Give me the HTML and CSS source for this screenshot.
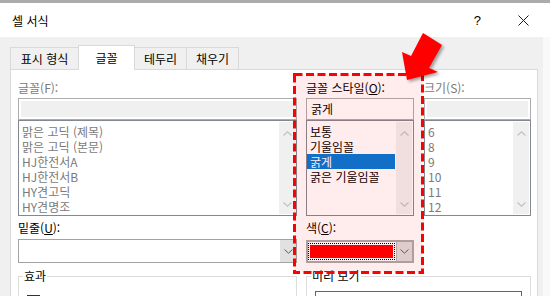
FILE: index.html
```html
<!DOCTYPE html>
<html lang="ko">
<head>
    <meta charset="UTF-8">
    <meta name="viewport" content="width=device-width, initial-scale=1.0">
    <title>셀 서식</title>
    <link rel="stylesheet" href="styles.css">
</head>
<body>
    <div class="window">
        <div class="titlebar">
            <span class="title">셀 서식</span>
            <span class="help">?</span>
            <svg class="close" width="11" height="11" viewBox="0 0 11 11"><path d="M0.5 0.5 L10.5 10.5 M10.5 0.5 L0.5 10.5" stroke="#1a1a1a" stroke-width="1" fill="none"/></svg>
        </div>

        <div class="dialog">
            <div class="tabs">
                <div class="tab t1">표시 형식</div>
                <div class="tab t2 active">글꼴</div>
                <div class="tab t3">테두리</div>
                <div class="tab t4">채우기</div>
            </div>

            <div class="panel">
                <!-- row: labels -->
                <div class="label off">글꼴(F):</div>
                <div class="label">글꼴 스타일(<u>O</u>):</div>
                <div class="label off c3">크기(S):</div>

                <!-- row: pickers -->
                <div class="picker">
                    <div class="field off"></div>
                    <div class="list off">
                        <ul>
                            <li>맑은 고딕 (제목)</li>
                            <li>맑은 고딕 (본문)</li>
                            <li>HJ한전서A</li>
                            <li>HJ한전서B</li>
                            <li>HY견고딕</li>
                            <li>HY견명조</li>
                        </ul>
                        <div class="scroll">
                            <svg width="9" height="5"><polyline points="0.5,4.5 4.5,0.8 8.5,4.5" fill="none" stroke="#c4c4c4" stroke-width="1.3"/></svg>
                            <svg width="9" height="5"><polyline points="0.5,0.5 4.5,4.2 8.5,0.5" fill="none" stroke="#c4c4c4" stroke-width="1.3"/></svg>
                        </div>
                    </div>
                </div>
                <div class="picker">
                    <div class="field">굵게</div>
                    <div class="list">
                        <ul>
                            <li>보통</li>
                            <li>기울임꼴</li>
                            <li class="selected">굵게</li>
                            <li>굵은 기울임꼴</li>
                        </ul>
                        <div class="scroll">
                            <svg width="9" height="5"><polyline points="0.5,4.5 4.5,0.8 8.5,4.5" fill="none" stroke="#c4c4c4" stroke-width="1.3"/></svg>
                            <svg width="9" height="5"><polyline points="0.5,0.5 4.5,4.2 8.5,0.5" fill="none" stroke="#c4c4c4" stroke-width="1.3"/></svg>
                        </div>
                    </div>
                </div>
                <div class="picker c3">
                    <div class="field off"></div>
                    <div class="list off">
                        <ul>
                            <li>6</li>
                            <li>8</li>
                            <li>9</li>
                            <li>10</li>
                            <li>11</li>
                            <li>12</li>
                        </ul>
                        <div class="scroll">
                            <svg width="9" height="5"><polyline points="0.5,4.5 4.5,0.8 8.5,4.5" fill="none" stroke="#c4c4c4" stroke-width="1.3"/></svg>
                            <svg width="9" height="5"><polyline points="0.5,0.5 4.5,4.2 8.5,0.5" fill="none" stroke="#c4c4c4" stroke-width="1.3"/></svg>
                        </div>
                    </div>
                </div>

                <!-- row: underline / colour labels -->
                <div class="label row2">밑줄(<u>U</u>):</div>
                <div class="label row2">색(<u>C</u>):</div>
                <div></div>

                <!-- row: combos -->
                <div class="combo">
                    <div class="btn"><svg width="9" height="5"><polyline points="0.5,0.5 4.5,4.2 8.5,0.5" fill="none" stroke="#5a5a5a" stroke-width="1"/></svg></div>
                </div>
                <div class="combo color">
                    <div class="swatch-wrap"><div class="swatch"></div></div>
                    <div class="btn"><svg width="9" height="5"><polyline points="0.5,0.5 4.5,4.2 8.5,0.5" fill="none" stroke="#5a5a5a" stroke-width="1"/></svg></div>
                </div>
                <div></div>

                <!-- row: groups -->
                <fieldset class="group">
                    <legend>효과</legend>
                    <div class="check"><span class="box"></span><span>취소선(K)</span></div>
                </fieldset>
                <fieldset class="group preview">
                    <legend>미리 보기</legend>
                    <div class="sample"></div>
                </fieldset>
            </div>
        </div>

        <!-- annotation drawn over the dialog -->
        <svg class="marks" width="550" height="296" viewBox="0 0 550 296">
            <rect x="294.5" y="74.5" width="128" height="198" fill="rgba(255,0,0,0.07)" stroke="#f00" stroke-width="3" stroke-dasharray="8 3.5"/>
            <polygon class="arrow" points="423,33 442,45 429,68 438,72 407,80 402,52 411,56" fill="#f00"/>
        </svg>
    </div>
</body>
</html>
```

FILE: styles.css
```css
html, body {
    margin: 0;
    height: 100%;
    overflow: hidden;
}
body {
    font-family: "Noto Sans CJK KR", "Noto Sans", sans-serif;
    font-size: 12px;
    color: #000;
    background: #f0f0f0;
}
.window {
    position: relative;
    width: 550px;
    height: 296px;
}
.titlebar {
    height: 34px;
    border-top: 3px solid #ababab;
    background: #fff;
    display: flex;
    align-items: center;
}
.title {
    flex: 1;
    margin-left: 12px;
}
.help {
    font-family: "Liberation Sans", sans-serif;
    font-size: 13px;
    margin-right: 37px;
}
.close {
    margin-right: 21px;
}
.dialog {
    padding: 8px 5px 0 10px;
    border-right: 7px solid #f9f9f9;
    height: 300px;
}
.tabs {
    display: flex;
    align-items: flex-end;
    height: 25px;
    margin-bottom: -1px;
    position: relative;
    z-index: 1;
}
.tab {
    box-sizing: border-box;
    height: 22px;
    margin-bottom: 1px;
    border: 1px solid #d9d9d9;
    border-bottom: none;
    background: #f0f0f0;
    text-align: center;
    line-height: 21px;
}
.tab + .tab {
    margin-left: -1px;
}
.t1 { width: 69px; }
.t2 { width: 57px; }
.t3 { width: 53px; }
.t4 { width: 53px; }
.tab.active {
    height: 25px;
    margin-bottom: 0;
    background: #fff;
    line-height: 23px;
    position: relative;
    z-index: 2;
}
.panel {
    box-sizing: border-box;
    width: 528px;
    height: 260px;
    border: 1px solid #d9d9d9;
    background: #fff;
    padding: 10px 6px 0 7px;
    display: grid;
    grid-template-columns: 279px 108px 108px;
    column-gap: 9px;
    align-content: start;
}
.c3 {
    margin-left: 1px;
}
.label {
    line-height: 16px;
    height: 16px;
    white-space: nowrap;
}
.label.row2 {
    margin-top: 4px;
}
.off {
    color: #7a7a7a;
}
.picker {
    margin-top: 2px;
}
.field {
    box-sizing: border-box;
    height: 22px;
    border: 1px solid #adadad;
    padding-left: 4px;
    line-height: 20px;
    background: #fff;
}
.field.off {
    background: #f0f0f0;
    box-shadow: inset 0 0 0 2px #fff;
}
.list {
    box-sizing: border-box;
    height: 96px;
    border: 1px solid #828790;
    background: #fff;
    display: flex;
}
.list ul {
    flex: 1;
    list-style: none;
    margin: 0;
    padding: 3px 0 0;
}
.list li {
    line-height: 15px;
    height: 15px;
    padding-left: 3px;
    white-space: nowrap;
}
.list li.selected {
    background: #0078d7;
    color: #fff;
}
.scroll {
    width: 16px;
    margin: 1px;
    background: #f0f0f0;
    display: flex;
    flex-direction: column;
    justify-content: space-between;
    align-items: center;
    padding: 9px 0 7px;
}
.scroll svg {
    display: block;
}
.combo {
    box-sizing: border-box;
    height: 24px;
    margin-top: 3px;
    border: 1px solid #a3a3a3;
    background: #fff;
    display: flex;
    justify-content: flex-end;
}
.combo .btn {
    width: 16px;
    background: #e1e1e1;
    display: flex;
    align-items: center;
    justify-content: center;
}
.combo .btn svg {
    display: block;
}
.combo.color {
    height: 23px;
    margin-top: 4px;
    border: 2px solid #a9a9a9;
}
.swatch-wrap {
    flex: 1;
    margin: 1px 1px 1px 0;
    padding: 1px;
    border: 1px dotted #000;
}
.swatch {
    height: 100%;
    background: #f00;
}
.combo.color .btn {
    width: 15px;
    background: #dcdcdc;
    border-left: 1px solid #b5b5b5;
}
.group {
    margin: 5px 0 0;
    padding: 0 4px;
    border: 1px solid #dcdcdc;
    min-width: 0;
    height: 60px;
}
.group legend {
    padding: 0 1px;
    line-height: 16px;
}
.preview {
    grid-column: 2 / 4;
}
.check {
    display: flex;
    align-items: center;
    gap: 7px;
    margin: 9px 0 0 4px;
    color: #6e2f8a;
}
.check .box {
    box-sizing: border-box;
    width: 13px;
    height: 13px;
    border: 1px solid #333;
    background: #fff;
}
.sample {
    margin: 7px 4px 0;
    height: 40px;
    border: 1px solid #646464;
}
.marks {
    position: absolute;
    left: 0;
    top: 0;
    pointer-events: none;
}
.arrow {
    filter: drop-shadow(2px 2px 1.5px rgba(0, 0, 0, 0.35));
}
```
